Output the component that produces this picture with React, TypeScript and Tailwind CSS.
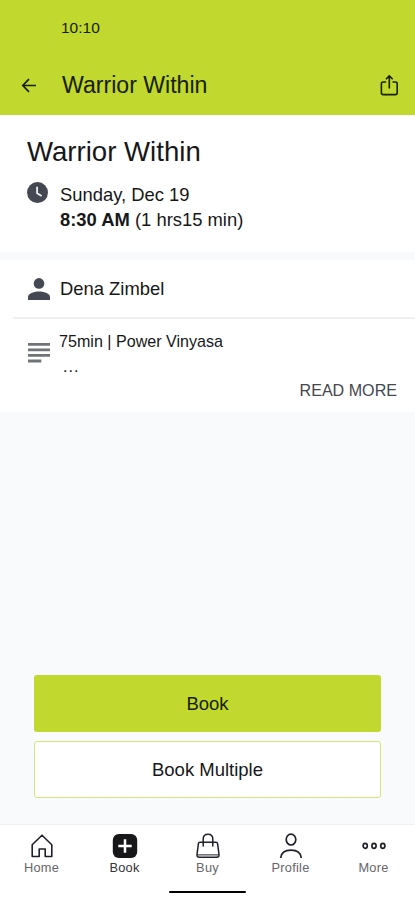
import type { ReactNode } from "react";

function ArrowLeft() {
  return (
    <svg width="16" height="16" viewBox="0 0 16 16" fill="none" stroke="#172000" strokeWidth="1.7">
      <path d="M15 8.5H1.8M8 2.2 1.8 8.5 8 14.8" />
    </svg>
  );
}

function ShareIcon() {
  return (
    <svg width="20" height="22" viewBox="0 0 20 22" fill="none" stroke="#172000" strokeWidth="1.6" strokeLinecap="round" strokeLinejoin="round">
      <path d="M5.5 8H3Q1.4 8 1.4 9.8V18.8Q1.4 20.6 3.2 20.6H15.4Q17.2 20.6 17.2 18.8V9.8Q17.2 8 15.6 8H13.1M9.3 14V2.5M6.4 4.8 9.3 1.9 12.2 4.8" />
    </svg>
  );
}

function ClockIcon() {
  return (
    <svg width="22" height="22" viewBox="0 0 22 22">
      <circle cx="10.5" cy="10.6" r="10.5" fill="#454852" />
      <path d="M10.1 4.8V11.2L14.6 13.9" fill="none" stroke="#eef0f3" strokeWidth="1.8" />
    </svg>
  );
}

function PersonIcon() {
  return (
    <svg width="22" height="22" viewBox="0 0 22 22" fill="#454852">
      <circle cx="11" cy="5.4" r="5.3" />
      <path d="M0 22V18.8C0 15.4 7 13.6 11 13.6S22 15.4 22 18.8V22Z" />
    </svg>
  );
}

function NotesIcon() {
  return (
    <svg width="22" height="20" viewBox="0 0 22 20" fill="#707478">
      <path d="M0 0H22V2.8H0ZM0 5.5H22V8.3H0ZM0 11H22V13.8H0ZM0 16.6H13.3V19.4H0Z" />
    </svg>
  );
}

const navItems: { label: string; dark?: boolean; icon: ReactNode }[] = [
  {
    label: "Home",
    icon: (
      <svg width="26" height="26" viewBox="0 0 26 26" fill="none" stroke="#20202c" strokeWidth="1.6" strokeLinejoin="round">
        <path d="M3.2 11.7 13 2.2 22.8 11.7V23.5H16.2V16H10.2V23.5H3.2Z" />
      </svg>
    ),
  },
  {
    label: "Book",
    dark: true,
    icon: (
      <svg width="26" height="26" viewBox="0 0 26 26">
        <rect x="0.8" y="1" width="24.4" height="24" rx="6" fill="#17171a" />
        <path d="M13 6.3V19.7M6.3 13H19.7" stroke="#fff" strokeWidth="2.5" />
      </svg>
    ),
  },
  {
    label: "Buy",
    icon: (
      <svg width="26" height="26" viewBox="0 0 26 26" fill="none" stroke="#20202a" strokeWidth="1.5" strokeLinecap="round" strokeLinejoin="round">
        <path d="M5 9.2H21Q22.4 9.2 22.6 10.6L24 21.7Q24.3 24.2 21.8 24.2H4.2Q1.7 24.2 2 21.7L3.4 10.6Q3.6 9.2 5 9.2ZM8.2 13V6Q8.2 1.2 13 1.2T17.8 6V13" />
        <path d="M2.7 21.9H23.3" strokeWidth="1" />
      </svg>
    ),
  },
  {
    label: "Profile",
    icon: (
      <svg width="26" height="26" viewBox="0 0 26 26" fill="none" stroke="#20202a" strokeWidth="1.7">
        <ellipse cx="13" cy="6.6" rx="4.8" ry="5.4" />
        <path d="M2.7 25C3.2 19.5 6.5 17.2 13 17.2S22.8 19.5 23.3 25" />
      </svg>
    ),
  },
  {
    label: "More",
    icon: (
      <svg width="26" height="26" viewBox="0 0 26 26" fill="none" stroke="#20202a" strokeWidth="1.7">
        <ellipse cx="4.2" cy="12.8" rx="2.1" ry="2.5" />
        <ellipse cx="13" cy="12.8" rx="2.1" ry="2.5" />
        <ellipse cx="21.8" cy="12.8" rx="2.1" ry="2.5" />
      </svg>
    ),
  },
];

export default function App() {
  return (
    <div className="flex h-[900px] w-full flex-col overflow-hidden bg-[#f8fafc] font-['Liberation_Sans',Arial,sans-serif] text-[#171719]">
      <header className="flex h-[115px] shrink-0 flex-col bg-[#c1d82f] text-[#172000]">
        <div className="pt-[18px] pl-[61px] text-[15.5px] leading-5">10:10</div>
        <div className="mt-[31px] flex h-8 items-center pr-[15px] pl-[21px]">
          <ArrowLeft />
          <h1 className="ml-[25px] flex-1 text-[23.1px] leading-8 whitespace-nowrap">Warrior Within</h1>
          <ShareIcon />
        </div>
      </header>

      <section className="h-[137px] shrink-0 bg-white pt-[19px] pl-[27px]">
        <h2 className="text-[27.6px] leading-9">Warrior Within</h2>
        <div className="mt-3 flex gap-[11px]">
          <ClockIcon />
          <div className="text-[18.4px] leading-[25px]">
            <p>Sunday, Dec 19</p>
            <p><strong>8:30 AM</strong> (1 hrs15 min)</p>
          </div>
        </div>
      </section>

      <section className="mt-2 h-[152px] shrink-0 bg-white">
        <div className="flex h-[57px] items-center gap-[10px] pl-7">
          <PersonIcon />
          <span className="text-[18.4px]">Dena Zimbel</span>
        </div>
        <div className="ml-[13px] h-[94px] border-t-2 border-[#eff0f2] pt-[10px] pr-[18px] pl-[15px]">
          <div className="flex h-[51px] gap-[9px]">
            <div className="pt-[14px]"><NotesIcon /></div>
            <div className="text-[16.1px] leading-[25px]">
              <p>75min | Power Vinyasa</p>
              <p className="pl-1 tracking-[1px]">...</p>
            </div>
          </div>
          <div className="text-right text-[16.1px] leading-5 text-[#44474d]">READ MORE</div>
        </div>
      </section>

      <div className="mt-auto flex shrink-0 flex-col gap-[9px] px-[34px] pb-[26px] text-[18.5px]">
        <button className="h-[57px] rounded-[3px] bg-[#c1d82f] text-[#172000]">Book</button>
        <button className="h-[57px] rounded-[3px] border-[1.5px] border-[#d4e57a] bg-white">Book Multiple</button>
      </div>

      <footer className="flex h-[76px] shrink-0 flex-col border-t border-[#edf1f4] bg-white">
        <nav className="grid grid-cols-5 pt-2">
          {navItems.map((item) => (
            <div key={item.label} className="flex flex-col items-center">
              {item.icon}
              <span className={`mt-px text-[12.8px] leading-4 tracking-[0.25px] ${item.dark ? "text-[#333338]" : "text-[#66666c]"}`}>{item.label}</span>
            </div>
          ))}
        </nav>
        <div className="mt-[15px] h-[2px] w-[77px] self-center rounded-full bg-black" />
      </footer>
    </div>
  );
}
